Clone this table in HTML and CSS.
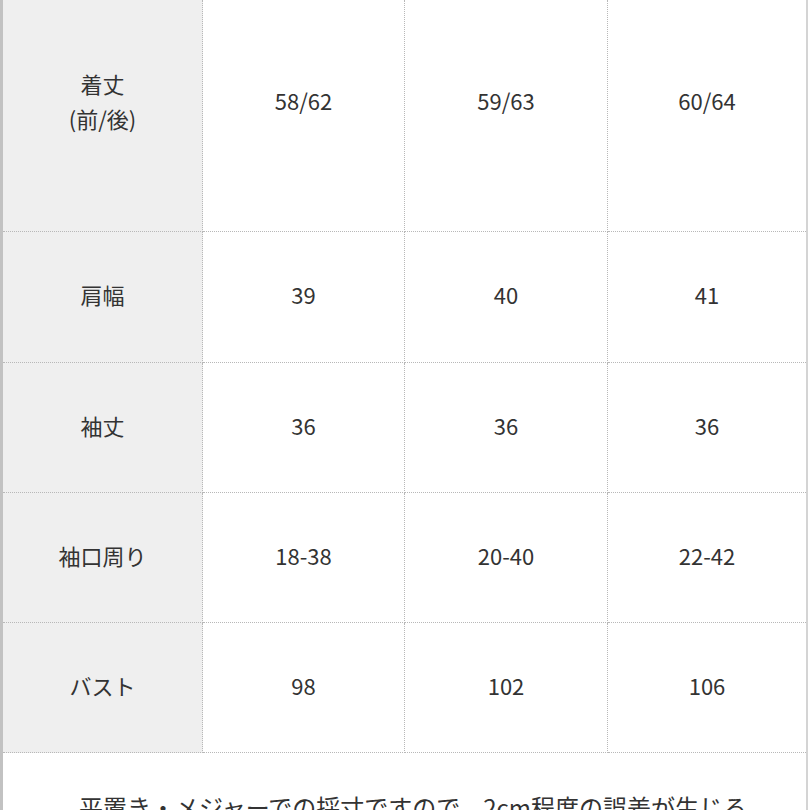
FILE: index.html
```html
<!DOCTYPE html>
<html lang="ja">
<head>
<meta charset="utf-8">
<link rel="stylesheet" href="styles.css">
</head>
<body>
<div class="frame">
  <div class="table">
    <div class="row first">
      <div class="cell head">着丈<br>(前/後)</div>
      <div class="cell">58/62</div>
      <div class="cell">59/63</div>
      <div class="cell last">60/64</div>
    </div>
    <div class="row second">
      <div class="cell head">肩幅</div>
      <div class="cell">39</div>
      <div class="cell">40</div>
      <div class="cell last">41</div>
    </div>
    <div class="row">
      <div class="cell head">袖丈</div>
      <div class="cell">36</div>
      <div class="cell">36</div>
      <div class="cell last">36</div>
    </div>
    <div class="row">
      <div class="cell head">袖口周り</div>
      <div class="cell">18-38</div>
      <div class="cell">20-40</div>
      <div class="cell last">22-42</div>
    </div>
    <div class="row">
      <div class="cell head">バスト</div>
      <div class="cell">98</div>
      <div class="cell">102</div>
      <div class="cell last">106</div>
    </div>
  </div>
  <p class="note">平置き・メジャーでの採寸ですので、2cm程度の誤差が生じる場合がございます。</p>
</div>
</body>
</html>
```

FILE: styles.css
```css
html, body {
  margin: 0;
  padding: 0;
  background: #ffffff;
}
body {
  font-family: "Noto Sans CJK JP", "Noto Sans", sans-serif;
  color: #333333;
  overflow: hidden;
  height: 810px;
}
.frame {
  width: 808px;
  box-sizing: border-box;
  border-left: 3px solid #c2c2c2;
  border-right: 2px solid #d4d4d4;
  min-height: 900px;
}
.table {
  display: flex;
  flex-direction: column;
}
.row {
  display: grid;
  grid-template-columns: 200px 202px 203px 198px;
  height: 130px;
}
.row.first {
  height: 232px;
}
.row.second {
  height: 131px;
}
.cell {
  box-sizing: border-box;
  border-right: 1px dotted #b8b8b8;
  border-bottom: 1px dotted #b8b8b8;
  display: flex;
  align-items: center;
  justify-content: center;
  text-align: center;
  font-size: 22px;
  line-height: 35px;
  padding-bottom: 5px;
}
.cell.last {
  border-right: none;
}
.cell.head {
  background: #efefef;
}
.row.first .cell {
  padding-bottom: 30px;
}
.note {
  margin: 0;
  padding: 36px 50px 0 67px;
  font-size: 24px;
  line-height: 36px;
  text-align: center;
}
```
